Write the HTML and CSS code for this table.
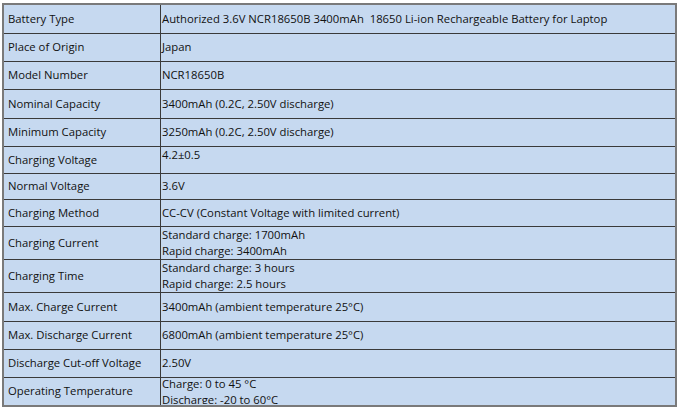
FILE: index.html
```html
<!DOCTYPE html>
<html>
<head>
<meta charset="utf-8">
<link rel="stylesheet" href="styles.css">
</head>
<body>
<table class="spec">
  <tr class="r29"><td class="k">Battery Type</td><td class="v">Authorized 3.6V NCR18650B 3400mAh&nbsp; 18650 Li-ion Rechargeable Battery for Laptop</td></tr>
  <tr class="r28"><td class="k">Place of Origin</td><td class="v">Japan</td></tr>
  <tr class="r28"><td class="k">Model Number</td><td class="v">NCR18650B</td></tr>
  <tr class="r29"><td class="k">Nominal Capacity</td><td class="v">3400mAh (0.2C, 2.50V discharge)</td></tr>
  <tr class="r28"><td class="k">Minimum Capacity</td><td class="v">3250mAh (0.2C, 2.50V discharge)</td></tr>
  <tr class="r27"><td class="k">Charging Voltage</td><td class="v top">4.2±0.5</td></tr>
  <tr class="r26"><td class="k">Normal Voltage</td><td class="v">3.6V</td></tr>
  <tr class="r27"><td class="k">Charging Method</td><td class="v">CC-CV (Constant Voltage with limited current)</td></tr>
  <tr class="r32"><td class="k">Charging Current</td><td class="v">Standard charge: 1700mAh<br>Rapid charge: 3400mAh</td></tr>
  <tr class="r31"><td class="k">Charging Time</td><td class="v">Standard charge: 3 hours<br>Rapid charge: 2.5 hours</td></tr>
  <tr class="r29"><td class="k">Max. Charge Current</td><td class="v">3400mAh (ambient temperature 25°C)</td></tr>
  <tr class="r28"><td class="k">Max. Discharge Current</td><td class="v">6800mAh (ambient temperature 25°C)</td></tr>
  <tr class="r28"><td class="k">Discharge Cut-off Voltage</td><td class="v">2.50V</td></tr>
  <tr class="r29"><td class="k">Operating Temperature</td><td class="v clip"><div class="clipbox">Charge: 0 to 45 °C<br>Discharge: -20 to 60°C</div></td></tr>
</table>
</body>
</html>
```
FILE: styles.css
```css
html, body {
  margin: 0;
  padding: 0;
  background: #ffffff;
}
body {
  padding: 3px 0 0 2px;
  font-family: "Open Sans", "Noto Sans", sans-serif;
  font-size: 11.3px;
  color: #111111;
}
.spec {
  border-collapse: collapse;
  width: 675px;
  table-layout: fixed;
  background: #c6d9f0;
  border: 2px solid #7a7a7a;
}
.spec td {
  border: 1px solid #3a3a3a;
  padding: 0 2px;
  line-height: 16px;
  vertical-align: middle;
  white-space: nowrap;
  overflow: hidden;
}
.spec td.k {
  width: 150px;
  padding-left: 4px;
}
.spec td.top {
  vertical-align: top;
}
.spec td.v {
  padding-left: 1px;
}
.r26 { height: 26px; }
.r27 { height: 27px; }
.r28 { height: 28px; }
.r29 { height: 29px; }
.r30 { height: 30px; }
.r31 { height: 31px; }
.r32 { height: 32px; }
.spec td.clip {
  vertical-align: top;
  padding-top: 0;
  padding-bottom: 0;
}
.clipbox {
  height: 28px;
  overflow: hidden;
  margin-top: -2px;
}
```
